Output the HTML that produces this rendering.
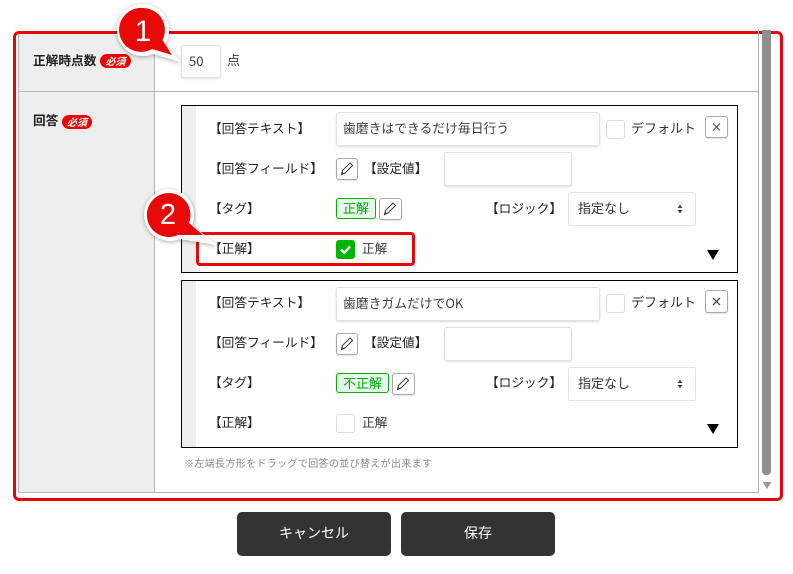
<!DOCTYPE html>
<html lang="ja">
<head>
<meta charset="utf-8">
<style>
html,body{margin:0;padding:0;background:#fff}
body{width:793px;height:574px;position:relative;overflow:hidden;font-family:"Liberation Sans","Noto Sans CJK JP",sans-serif;color:#222;}
.a{position:absolute;box-sizing:border-box}
.t{position:absolute;white-space:nowrap;font-size:12.7px;line-height:18px;font-family:"Noto Sans CJK JP",sans-serif;color:#222}
.b{font-weight:700;font-size:12.7px;color:#222}
.req{position:absolute;background:#f00000;color:#fff;border-radius:8px;font-size:10px;font-weight:700;font-style:italic;line-height:14px;height:14px;text-align:center;font-family:"Noto Sans CJK JP",sans-serif}
.in{position:absolute;box-sizing:border-box;background:#fff;border:1px solid #e2e2e2;border-radius:3px;box-shadow:0 1px 2px rgba(0,0,0,.14);font-family:"Noto Sans CJK JP",sans-serif;font-size:12.8px;color:#3a4250;line-height:30px;padding-left:6px;white-space:nowrap}
.cb{position:absolute;box-sizing:border-box;width:19px;height:19px;border:1px solid #d8dae2;border-radius:3px;background:#fff}
.btn{position:absolute;box-sizing:border-box;border:1px solid #a3a8ba;border-radius:3px;background:#fff;box-shadow:0 1px 1px rgba(0,0,0,.12)}
.tag{position:absolute;box-sizing:border-box;height:21px;background:#e4f7ea;border:1px solid #00b400;border-radius:3px;color:#00a800;font-size:13px;line-height:18px;text-align:center;font-family:"Noto Sans CJK JP",sans-serif}
.box{position:absolute;box-sizing:border-box;left:181px;width:557px;border:1px solid #000;background:#fff}
.hd{position:absolute;left:0;top:0;bottom:0;width:14px;background:#eee}
.tri{position:absolute;width:0;height:0;border-left:6px solid transparent;border-right:6px solid transparent;border-top:10px solid #000}
.sel{line-height:30px;padding-left:9px;color:#333;font-size:13px}
.cta{position:absolute;box-sizing:border-box;top:512px;width:154px;height:44px;background:#333;border-radius:5px;color:#fff;text-align:center;font-size:14px;line-height:42px;font-family:"Noto Sans CJK JP",sans-serif}
</style>
</head>
<body>
<div class="a" style="left:18px;top:34px;width:137px;height:458px;background:#eee"></div>
<div class="a" style="left:18px;top:34px;width:1px;height:459px;background:#b5b5b5"></div>
<div class="a" style="left:154px;top:34px;width:1px;height:459px;background:#b5b5b5"></div>
<div class="a" style="left:18px;top:91px;width:741px;height:1px;background:#b5b5b5"></div>
<div class="a" style="left:18px;top:492px;width:741px;height:1px;background:#b5b5b5"></div>

<div class="t b" style="left:33px;top:51px">正解時点数</div>
<div class="req" style="left:100px;top:54px;width:31px">必須</div>
<div class="t b" style="left:33px;top:111px">回答</div>
<div class="req" style="left:62px;top:115px;width:30px">必須</div>

<div class="in" style="left:181px;top:45px;width:40px;height:33px;padding-left:7px;font-size:13px">50</div>
<div class="t" style="left:227px;top:51px;color:#333;font-size:13px">点</div>

<!-- Box 1 -->
<div class="box" style="top:105px;height:168px"><div class="hd"></div></div>
<div class="t" style="left:209px;top:119px">【回答テキスト】</div>
<div class="in" style="left:336px;top:112px;width:264px;height:34px">歯磨きはできるだけ毎日行う</div>
<div class="cb" style="left:606px;top:120px"></div>
<div class="t" style="left:631px;top:119px;font-size:13px;color:#333">デフォルト</div>
<div class="btn" style="left:705px;top:116px;width:23px;height:22px"><svg width="21" height="20" style="display:block"><path d="M7 6.500L14 13.500M14 6.500L7 13.500" stroke="#555" stroke-width="1.100" fill="none"/></svg></div>
<div class="t" style="left:209px;top:159px">【回答フィールド】</div>
<div class="btn" style="left:336px;top:158px;width:22px;height:22px"><svg width="20" height="20" style="display:block"><path d="M4.500 15.500L5.500 11.500L13 4L15.500 6.500L8 14L4.500 15.500Z" stroke="#444" stroke-width="1.100" fill="none"/><path d="M4.500 15.500L5.300 12.700L7 14.500Z" fill="#333"/></svg></div>
<div class="t" style="left:364px;top:159px">【設定値】</div>
<div class="in" style="left:444px;top:152px;width:128px;height:34px"></div>
<div class="t" style="left:209px;top:199px">【タグ】</div>
<div class="tag" style="left:336px;top:198px;width:40px">正解</div>
<div class="btn" style="left:379px;top:198px;width:23px;height:22px"><svg width="21" height="20" style="display:block"><path d="M4.500 15.500L5.500 11.500L13 4L15.500 6.500L8 14L4.500 15.500Z" stroke="#444" stroke-width="1.100" fill="none"/><path d="M4.500 15.500L5.300 12.700L7 14.500Z" fill="#333"/></svg></div>
<div class="t" style="left:486px;top:199px">【ロジック】</div>
<div class="in sel" style="left:568px;top:192px;width:128px;height:34px;box-shadow:none">指定なし</div>
<svg class="a" style="left:676px;top:203px" width="8" height="12"><path d="M1.500 5L4 1.500L6.500 5ZM1.500 7L4 10.500L6.500 7Z" fill="#444"/></svg>
<div class="t" style="left:209px;top:239px">【正解】</div>
<div class="a" style="left:336px;top:240px;width:19px;height:19px;background:#00b400;border-radius:3px"><svg width="19" height="19" style="display:block"><path d="M5 9.500L8.300 12.800L14 6.500" stroke="#fff" stroke-width="2.400" fill="none"/></svg></div>
<div class="t" style="left:362px;top:239px;color:#333">正解</div>
<div class="tri" style="left:707px;top:250px"></div>

<!-- Box 2 -->
<div class="box" style="top:280px;height:168px"><div class="hd"></div></div>
<div class="t" style="left:209px;top:293px">【回答テキスト】</div>
<div class="in" style="left:336px;top:287px;width:264px;height:34px">歯磨きガムだけでOK</div>
<div class="cb" style="left:606px;top:294px"></div>
<div class="t" style="left:631px;top:293px;font-size:13px;color:#333">デフォルト</div>
<div class="btn" style="left:705px;top:290px;width:23px;height:23px"><svg width="21" height="21" style="display:block"><path d="M7 7L14 14M14 7L7 14" stroke="#333" stroke-width="1.200" fill="none"/></svg></div>
<div class="t" style="left:209px;top:333px">【回答フィールド】</div>
<div class="btn" style="left:336px;top:333px;width:22px;height:22px"><svg width="20" height="20" style="display:block"><path d="M4.500 15.500L5.500 11.500L13 4L15.500 6.500L8 14L4.500 15.500Z" stroke="#444" stroke-width="1.100" fill="none"/><path d="M4.500 15.500L5.300 12.700L7 14.500Z" fill="#333"/></svg></div>
<div class="t" style="left:364px;top:333px">【設定値】</div>
<div class="in" style="left:444px;top:327px;width:128px;height:34px"></div>
<div class="t" style="left:209px;top:373px">【タグ】</div>
<div class="tag" style="left:336px;top:373px;width:53px;height:20px;line-height:17px">不正解</div>
<div class="btn" style="left:392px;top:373px;width:23px;height:22px"><svg width="21" height="20" style="display:block"><path d="M4.500 15.500L5.500 11.500L13 4L15.500 6.500L8 14L4.500 15.500Z" stroke="#444" stroke-width="1.100" fill="none"/><path d="M4.500 15.500L5.300 12.700L7 14.500Z" fill="#333"/></svg></div>
<div class="t" style="left:486px;top:373px">【ロジック】</div>
<div class="in sel" style="left:568px;top:367px;width:128px;height:34px;box-shadow:none">指定なし</div>
<svg class="a" style="left:676px;top:378px" width="8" height="12"><path d="M1.500 5L4 1.500L6.500 5ZM1.500 7L4 10.500L6.500 7Z" fill="#444"/></svg>
<div class="t" style="left:209px;top:413px">【正解】</div>
<div class="cb" style="left:336px;top:414px"></div>
<div class="t" style="left:362px;top:413px;color:#333">正解</div>
<div class="tri" style="left:707px;top:424px"></div>

<div class="t" style="left:184px;top:454px;font-size:10px;color:#888;letter-spacing:.35px">※左端長方形をドラッグで回答の並び替えが出来ます</div>

<!-- Red highlight frames -->
<div class="a" style="left:13px;top:31px;width:770px;height:470px;border:3px solid #e60808;border-radius:6px"></div>
<div class="a" style="left:196px;top:232px;width:219px;height:34px;border:3px solid #e60808;border-radius:4px"></div>

<!-- Scrollbar, drawn over the frame -->
<div class="a" style="left:758px;top:30px;width:1px;height:463px;background:#b5b5b5"></div>
<div class="a" style="left:762px;top:30px;width:9px;height:445px;background:#8f8f8f;border-radius:0 0 4px 4px"></div>
<svg class="a" style="left:762px;top:481px" width="10" height="9"><path d="M0.500 1H9.500L5 8Z" fill="#9a9a9a"/></svg>

<!-- Callouts -->
<svg class="a" style="left:105px;top:0" width="90" height="75" overflow="visible">
<defs><filter id="s" x="-30%" y="-30%" width="160%" height="160%"><feDropShadow dx="0" dy="1" stdDeviation="2" flood-color="#000" flood-opacity=".35"/></filter></defs>
<path d="M38 4A26 26 0 0 1 60 44L76 62L48 54A26 26 0 1 1 38 4Z" fill="#fff" filter="url(#s)"/>
<path d="M38 8A22 22 0 0 1 57.500 40L67 55L47 49A22 22 0 1 1 38 8Z" fill="#e80808"/>
<text x="38" y="41" text-anchor="middle" font-family="Liberation Sans,sans-serif" font-size="30" fill="#fff">1</text>
</svg>
<svg class="a" style="left:130px;top:185px" width="100" height="75" overflow="visible">
<path d="M38 4A26 26 0 0 1 62 40L87 60L50 54A26 26 0 1 1 38 4Z" fill="#fff" filter="url(#s)"/>
<path d="M38 8A22 22 0 0 1 59 38L73 50L48 50A22 22 0 1 1 38 8Z" fill="#e80808"/>
<text x="38" y="39" text-anchor="middle" font-family="Liberation Sans,sans-serif" font-size="29" fill="#fff">2</text>
</svg>

<div class="cta" style="left:237px">キャンセル</div>
<div class="cta" style="left:401px">保存</div>
</body>
</html>
